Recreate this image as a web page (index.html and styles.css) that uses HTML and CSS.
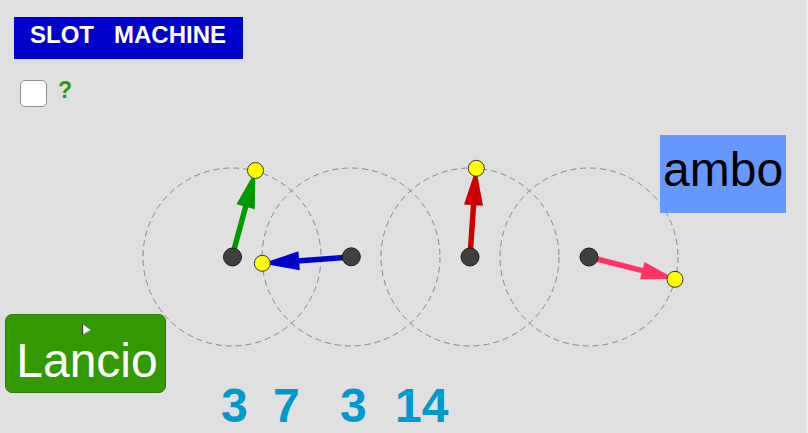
FILE: index.html
```html
<!DOCTYPE html>
<html lang="it">
<head>
<meta charset="utf-8">
<title>Slot machine</title>
<link rel="stylesheet" href="styles.css">
</head>
<body>
<div class="applet">
  <svg class="canvas" width="806" height="433" viewBox="0 0 806 433" xmlns="http://www.w3.org/2000/svg">
    <g class="rings" fill="none" stroke="#8a8a8a" stroke-width="1" stroke-dasharray="6 4">
      <circle cx="232" cy="257" r="89"/>
      <circle cx="351" cy="257" r="89"/>
      <circle cx="470" cy="257" r="89"/>
      <circle cx="589" cy="257" r="89"/>
    </g>
    <g transform="translate(232 257) rotate(-74.8)">
      <line x1="0" y1="0" x2="54" y2="0" stroke="#009900" stroke-width="5.5"/>
      <polygon points="89,0 52,-9.5 52,9.5" fill="#009900"/>
    </g>
    <g transform="translate(351 257) rotate(175.8)">
      <line x1="0" y1="0" x2="54" y2="0" stroke="#0000cc" stroke-width="5.5"/>
      <polygon points="89,0 52,-9.5 52,9.5" fill="#0000cc"/>
    </g>
    <g transform="translate(470 257) rotate(-86.1)">
      <line x1="0" y1="0" x2="54" y2="0" stroke="#cc0000" stroke-width="5.5"/>
      <polygon points="89,0 52,-9.5 52,9.5" fill="#cc0000"/>
    </g>
    <g transform="translate(589 257) rotate(14.35)">
      <line x1="0" y1="0" x2="56" y2="0" stroke="#ff3366" stroke-width="5.5"/>
      <polygon points="89,0 55,-9 55,9" fill="#ff3366"/>
    </g>
    <g fill="#404040" stroke="#1c1c1c" stroke-width="1">
      <circle cx="232.5" cy="257" r="9"/>
      <circle cx="351.3" cy="256.8" r="9"/>
      <circle cx="470" cy="257" r="9"/>
      <circle cx="589" cy="257" r="9"/>
    </g>
    <g fill="#ffff00" stroke="#333" stroke-width="1">
      <circle cx="255.5" cy="170.5" r="8"/>
      <circle cx="262.3" cy="263.3" r="8"/>
      <circle cx="476.3" cy="168.3" r="8"/>
      <circle cx="675" cy="279.3" r="8"/>
    </g>
  </svg>

  <div class="title">SLOT&nbsp;&nbsp;&nbsp;MACHINE</div>

  <label class="check">
    <span class="box"></span>
    <span class="qmark">?</span>
  </label>

  <div class="result">ambo</div>

  <button class="launch" type="button">
    <svg class="play" width="11" height="13" viewBox="0 0 11 13" xmlns="http://www.w3.org/2000/svg">
      <polygon points="1.5,1 10,7 1.5,12" fill="#f4f4f4" stroke="#8a8a8a" stroke-width="1"/>
      <line x1="1.5" y1="1" x2="1.5" y2="12" stroke="#3a3a3a" stroke-width="1.2"/>
    </svg>
    <span class="launch-label">Lancio</span>
  </button>

  <div class="num n1">3</div>
  <div class="num n2">7</div>
  <div class="num n3">3</div>
  <div class="num n4">14</div>
</div>
</body>
</html>
```
FILE: styles.css
```css
html, body {
  margin: 0;
  padding: 0;
  background: #ececec;
}

.applet {
  position: relative;
  width: 806px;
  height: 433px;
  background: #e0e0e0;
  overflow: hidden;
  font-family: "Liberation Sans", Arial, sans-serif;
}

.canvas {
  position: absolute;
  left: 0;
  top: 0;
}

.title {
  position: absolute;
  left: 14px;
  top: 17px;
  width: 229px;
  height: 42px;
  box-sizing: border-box;
  padding: 6px 0 0 16px;
  background: #0000cc;
  color: #ffffff;
  font-weight: bold;
  font-size: 24px;
  line-height: 24px;
  white-space: nowrap;
}

.check {
  position: absolute;
  left: 20px;
  top: 80px;
  display: flex;
  align-items: flex-start;
  gap: 11px;
}

.box {
  width: 27px;
  height: 27px;
  box-sizing: border-box;
  border: 1.5px solid #8e8e8e;
  border-radius: 5px;
  background: #ffffff;
}

.qmark {
  color: #339900;
  font-weight: bold;
  font-size: 23px;
  line-height: 23px;
  margin-top: -1px;
}

.result {
  position: absolute;
  left: 660px;
  top: 135px;
  width: 126px;
  height: 78px;
  box-sizing: border-box;
  padding: 11px 0 0 3px;
  background: #6699ff;
  color: #000000;
  font-size: 48px;
  line-height: 48px;
}

.launch {
  position: absolute;
  left: 5px;
  top: 314px;
  width: 161px;
  height: 79px;
  box-sizing: border-box;
  margin: 0;
  padding: 22px 0 0 0;
  border: 1px solid #2e7d00;
  border-radius: 7px;
  background: #339900;
  color: #ffffff;
  font-family: "Liberation Sans", Arial, sans-serif;
  font-size: 48px;
  line-height: 48px;
  text-align: center;
  display: flex;
  justify-content: center;
  align-items: flex-start;
}

.launch-label {
  display: block;
  margin-left: 3px;
}

.play {
  position: absolute;
  left: 75px;
  top: 8px;
}

.num {
  position: absolute;
  top: 382px;
  color: #0099cc;
  font-weight: bold;
  font-size: 48px;
  line-height: 48px;
}

.n1 { left: 221px; }
.n2 { left: 273px; }
.n3 { left: 340px; }
.n4 { left: 395px; }
```
